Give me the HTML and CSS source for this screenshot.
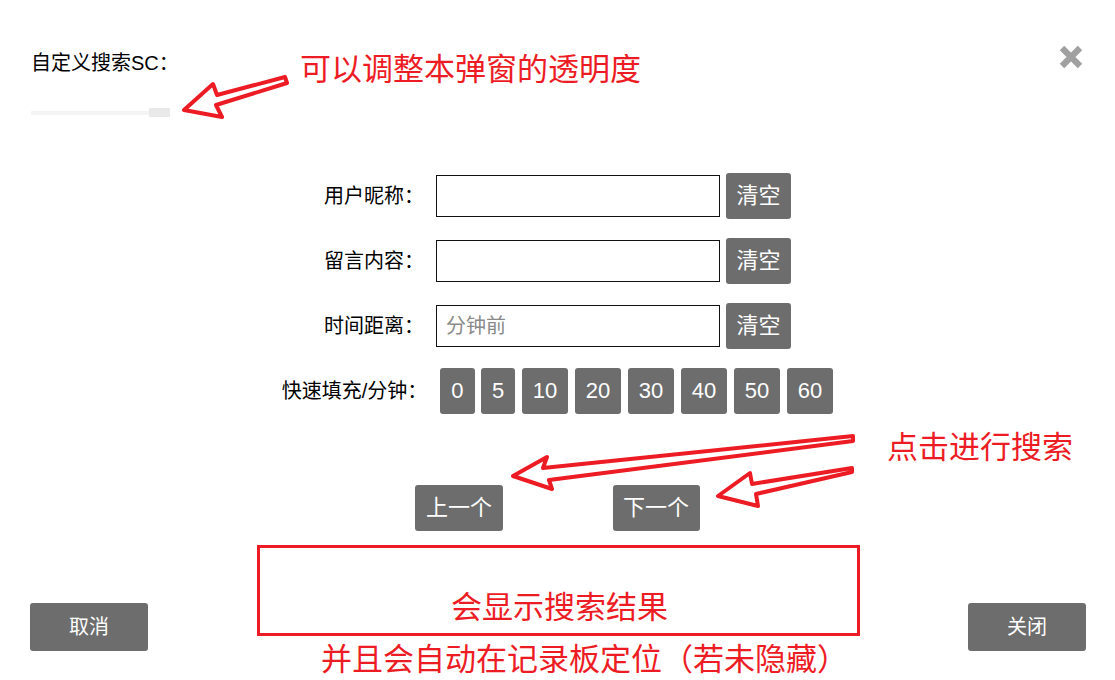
FILE: index.html
```html
<!DOCTYPE html>
<html lang="zh-CN">
<head>
<meta charset="utf-8">
<title>自定义搜索SC</title>
<link rel="stylesheet" href="styles.css">
</head>
<body>
<div class="dialog">
  <h1 class="title">自定义搜索SC：</h1>
  <button class="close" aria-label="关闭">
    <svg width="24" height="24" viewBox="0 0 24 24"><path d="M3 3L21 21M21 3L3 21" stroke="#a0a0a0" stroke-width="6.2" fill="none"/></svg>
  </button>
  <div class="slider"><div class="track"></div><div class="thumb"></div></div>

  <div class="form">
    <div class="row">
      <label class="label">用户昵称：</label>
      <input class="field" type="text">
      <button class="btn">清空</button>
    </div>
    <div class="row">
      <label class="label">留言内容：</label>
      <input class="field" type="text">
      <button class="btn">清空</button>
    </div>
    <div class="row">
      <label class="label">时间距离：</label>
      <input class="field" type="text" placeholder="分钟前">
      <button class="btn">清空</button>
    </div>
    <div class="row">
      <label class="label label-wide">快速填充/分钟：</label>
      <div class="quick">
        <button class="btn num">0</button>
        <button class="btn num">5</button>
        <button class="btn num">10</button>
        <button class="btn num">20</button>
        <button class="btn num">30</button>
        <button class="btn num">40</button>
        <button class="btn num">50</button>
        <button class="btn num">60</button>
      </div>
    </div>
  </div>

  <div class="nav">
    <button class="btn">上一个</button>
    <button class="btn">下一个</button>
  </div>

  <div class="footer">
    <button class="btn wide">取消</button>
    <button class="btn wide">关闭</button>
  </div>

  <div class="note-box"></div>
  <svg class="arrows" width="1115" height="680" viewBox="0 0 1115 680">
    <polygon points="184,110 213,84 217,95 285,77 287,83 216,105 222,117" />
    <polygon points="513,476 547,457 543,468 853,436 853,441 549,480 552,489" />
    <polygon points="718,496 750,473 752,484 852,468 852,472 756,494 758,506" />
  </svg>
  <div class="note n1">可以调整本弹窗的透明度</div>
  <div class="note n2">点击进行搜索</div>
  <div class="note n3">会显示搜索结果</div>
  <div class="note n4">并且会自动在记录板定位（若未隐藏）</div>
</div>
</body>
</html>
```
FILE: styles.css
```css
html, body {
  margin: 0;
  padding: 0;
  background: #fff;
}
body {
  font-family: "Liberation Sans", "Noto Sans CJK SC", sans-serif;
  color: #000;
}
.dialog {
  position: relative;
  width: 1115px;
  height: 680px;
  overflow: hidden;
}
.title {
  margin: 0;
  padding: 49px 0 0 31px;
  font-size: 20px;
  line-height: 28px;
  font-weight: normal;
}
.close {
  position: absolute;
  top: 45px;
  right: 32px;
  width: 24px;
  height: 24px;
  padding: 0;
  border: 0;
  background: none;
}
.close svg { display: block; }
.slider {
  position: relative;
  margin: 31px 0 0 31px;
  width: 139px;
  height: 9px;
}
.track {
  position: absolute;
  left: 0;
  right: 0;
  top: 3px;
  height: 4px;
  background: #f4f4f4;
}
.thumb {
  position: absolute;
  right: 0;
  top: 0;
  width: 21px;
  height: 9px;
  background: #e9e9e9;
}
.form {
  margin-top: 56px;
  display: flex;
  flex-direction: column;
  align-items: center;
  gap: 19px;
}
.row {
  display: flex;
  align-items: center;
  gap: 6px;
  height: 46px;
}
.label {
  font-size: 20px;
  line-height: 28px;
  margin-right: 6px;
}
.label-wide { margin-right: 7px; }
.field {
  box-sizing: border-box;
  width: 284px;
  height: 42px;
  border: 1px solid #111;
  padding: 0 9px;
  font-family: "Liberation Sans", "Noto Sans CJK SC", sans-serif;
  font-size: 20px;
  outline: none;
  margin: 0;
}
.field::placeholder { color: #8a8a8a; }
.btn {
  box-sizing: border-box;
  height: 46px;
  padding: 0 10.5px;
  border: 0;
  border-radius: 3px;
  background: #6d6d6d;
  color: #fff;
  font-family: "Liberation Sans", "Noto Sans CJK SC", sans-serif;
  font-size: 22px;
  line-height: 46px;
  margin: 0;
}
.quick {
  display: flex;
  gap: 6.5px;
}
.num { padding: 0 11px; }
.nav {
  margin-top: 71px;
  display: flex;
  justify-content: center;
  gap: 110px;
}
.footer {
  margin-top: 72px;
  display: flex;
  justify-content: space-between;
  padding: 0 29px 0 30px;
}
.wide {
  width: 118px;
  height: 48px;
  line-height: 48px;
  font-size: 20px;
}
.note-box {
  position: absolute;
  left: 257px;
  top: 545px;
  width: 597px;
  height: 85px;
  border: 3px solid #ed1c24;
}
.arrows {
  position: absolute;
  left: 0;
  top: 0;
  pointer-events: none;
}
.arrows polygon {
  fill: none;
  stroke: #ed1c24;
  stroke-width: 4;
  stroke-linejoin: round;
}
.note {
  position: absolute;
  color: #ed1c24;
  font-family: "Noto Sans CJK SC", sans-serif;
  font-size: 31px;
  line-height: 31px;
  white-space: nowrap;
}
.n1 { left: 300px; top: 51px; }
.n2 { left: 887px; top: 429px; }
.n3 { left: 451px; top: 589px; }
.n4 { left: 321px; top: 641px; }
```
